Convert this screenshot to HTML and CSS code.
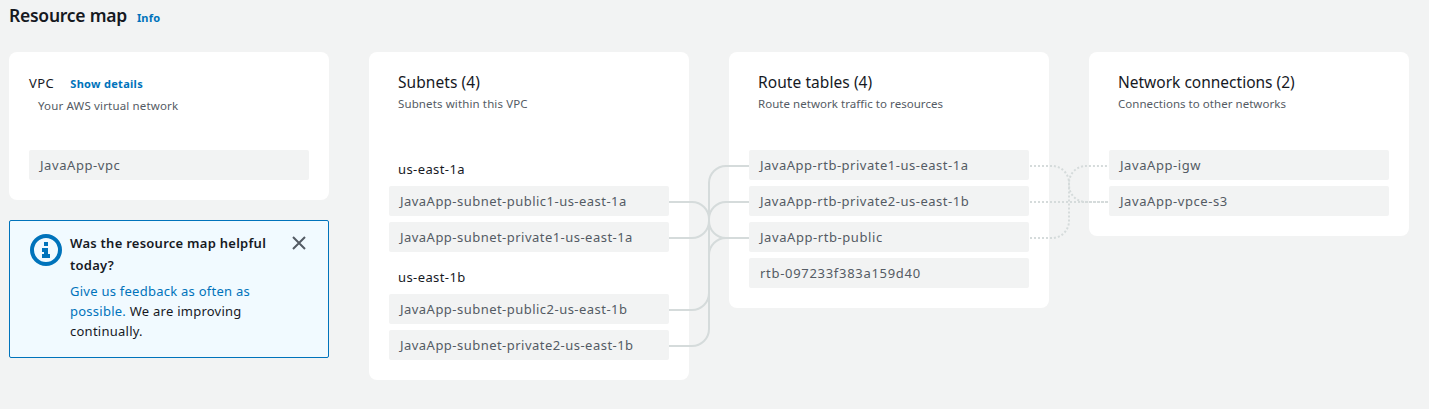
FILE: index.html
```html
<!DOCTYPE html>
<html lang="en">
<head>
<meta charset="utf-8">
<title>Resource map</title>
<link rel="stylesheet" href="styles.css">
</head>
<body>
<header class="header">
  <h1 class="title">Resource map</h1>
  <a class="info">Info</a>
</header>
<main class="map">
  <div class="column">
    <section class="card">
      <div class="head head-vpc">
        <div class="vpc-row"><h2 class="vpc-name">VPC</h2><a class="details">Show details</a></div>
        <p class="vpc-desc">Your AWS virtual network</p>
      </div>
      <ul class="items"><li class="item"><span class="t-short">JavaApp-vpc</span></li></ul>
    </section>
    <aside class="alert">
      <svg class="alert-icon" width="32" height="32" viewBox="0 0 32 32">
        <circle cx="16" cy="16" r="14" fill="none" stroke="#0073bb" stroke-width="4"/>
        <path fill="#0073bb" d="M14 8h4v4h-4zM12 14h6v6h2v4h-8v-4h2v-2h-2z"/>
      </svg>
      <div class="alert-text">
        <h3 class="question">Was the resource map helpful<br>today?</h3>
        <p class="feedback"><a class="link">Give us feedback as often as<br>possible.</a> We are improving<br>continually.</p>
      </div>
      <svg class="close" width="14" height="14" viewBox="0 0 14 14"><path d="M1 1l12 12M13 1L1 13" fill="none" stroke="#545b64" stroke-width="2"/></svg>
    </aside>
  </div>
  <section class="card">
    <div class="head"><h2 class="name n-sub">Subnets (4)</h2><p class="desc d-sub">Subnets within this VPC</p></div>
    <h3 class="zone">us-east-1a</h3>
    <ul class="items">
      <li class="item">JavaApp-subnet-public1-us-east-1a</li>
      <li class="item">JavaApp-subnet-private1-us-east-1a</li>
    </ul>
    <h3 class="zone zone-next">us-east-1b</h3>
    <ul class="items">
      <li class="item">JavaApp-subnet-public2-us-east-1b</li>
      <li class="item">JavaApp-subnet-private2-us-east-1b</li>
    </ul>
  </section>
  <section class="card">
    <div class="head"><h2 class="name">Route tables (4)</h2><p class="desc">Route network traffic to resources</p></div>
    <ul class="items">
      <li class="item"><span class="t-rtb">JavaApp-rtb-private1-us-east-1a</span></li>
      <li class="item"><span class="t-rtb">JavaApp-rtb-private2-us-east-1b</span></li>
      <li class="item"><span class="t-short">JavaApp-rtb-public</span></li>
      <li class="item"><span class="t-id">rtb-097233f383a159d40</span></li>
    </ul>
  </section>
  <section class="card">
    <div class="head"><h2 class="name n-nc">Network connections (2)</h2><p class="desc">Connections to other networks</p></div>
    <ul class="items">
      <li class="item"><span class="t-short">JavaApp-igw</span></li>
      <li class="item"><span class="t-short">JavaApp-vpce-s3</span></li>
    </ul>
  </section>
  <svg class="wires" width="1400" height="328" viewBox="9 52 1400 328">
    <g fill="none" stroke="#d5dbdb" stroke-width="2">
      <path d="M669 202H692A17 17 0 0 1 709 219V221A17 17 0 0 0 726 238H749"/>
      <path d="M669 238H692A17 17 0 0 0 709 221V183A17 17 0 0 1 726 166H749"/>
      <path d="M669 310H692A17 17 0 0 0 709 293V255A17 17 0 0 1 726 238H749"/>
      <path d="M669 346H692A17 17 0 0 0 709 329V219A17 17 0 0 1 726 202H749"/>
    </g>
    <g fill="none" stroke="#d5dbdb" stroke-width="2" stroke-dasharray="2 2">
      <path d="M1030 166H1052A17 17 0 0 1 1069 183V185A17 17 0 0 0 1086 202H1109"/>
      <path d="M1030 202H1109"/>
      <path d="M1030 238H1052A17 17 0 0 0 1069 221V183A17 17 0 0 1 1086 166H1109"/>
    </g>
  </svg>
</main>
</body>
</html>
```
FILE: styles.css
```css
* { box-sizing: border-box; }
body {
  margin: 0;
  height: 409px;
  overflow: hidden;
  background: #f2f3f3;
  color: #16191f;
  font-family: "Noto Sans", "Open Sans", sans-serif;
  font-size: 13px;
  letter-spacing: 0.47px;
}
h1, h2, h3, p, ul { margin: 0; padding: 0; font-weight: 400; }
ul { list-style: none; }
span, a, h1, h2, h3, p, li { white-space: nowrap; }
.header { display: flex; align-items: baseline; gap: 10px; height: 52px; padding: 3px 9px 0; }
.title { font-size: 17.5px; line-height: 24px; font-weight: 600; letter-spacing: -0.25px; }
.info, .details { color: #0073bb; font-size: 11px; font-weight: 700; letter-spacing: 0.3px; }
.info { letter-spacing: 0.2px; }
.map { position: relative; display: flex; align-items: flex-start; gap: 40px; padding: 0 9px; }
.column { display: flex; flex-direction: column; gap: 20px; }
.card { width: 320px; padding: 20px; background: #fff; border-radius: 8px; }
.head { display: flow-root; height: 78px; padding-left: 9px; }
.head-vpc { padding: 1px 0 0; }
.vpc-row { display: flex; align-items: baseline; gap: 16px; height: 20px; line-height: 20px; }
.vpc-name { font-size: 13px; }
.vpc-desc, .desc { color: #545b64; font-size: 11.5px; line-height: 20px; letter-spacing: 0.04px; }
.vpc-desc { padding: 3px 0 0 9px; letter-spacing: 0.16px; }
.d-sub { letter-spacing: 0.12px; }
.name { margin-top: -1px; padding-bottom: 1px; font-size: 15.5px; line-height: 22px; letter-spacing: 0.07px; }
.n-nc { letter-spacing: 0; }
.zone { height: 36px; padding: 9px 0 0 9px; font-size: 13px; line-height: 20px; letter-spacing: 0.4px; }
.zone-next { height: 42px; padding-top: 15px; }
.items { display: flex; flex-direction: column; gap: 6px; }
.item { height: 30px; padding-left: 11px; line-height: 30px; color: #545b64; background: #f2f3f3; border-radius: 2px; }
.t-rtb { letter-spacing: 0.51px; }
.t-short { letter-spacing: 0.57px; }
.t-id { letter-spacing: 0.7px; }
.alert { display: flex; width: 320px; height: 138px; padding: 11px 20px; border: 1px solid #0073bb; border-radius: 2px; background: #f1faff; }
.alert-icon { flex: none; margin-top: 2px; }
.alert-text { flex: none; width: 230px; padding-left: 8px; }
.question { font-weight: 600; line-height: 22px; font-size: 13px; letter-spacing: 0.26px; }
.feedback { padding-top: 5px; line-height: 20px; letter-spacing: 0.25px; }
.link { color: #0073bb; }
.close { flex: none; margin-top: 4px; }
.wires { position: absolute; left: 9px; top: 0; pointer-events: none; }
```
